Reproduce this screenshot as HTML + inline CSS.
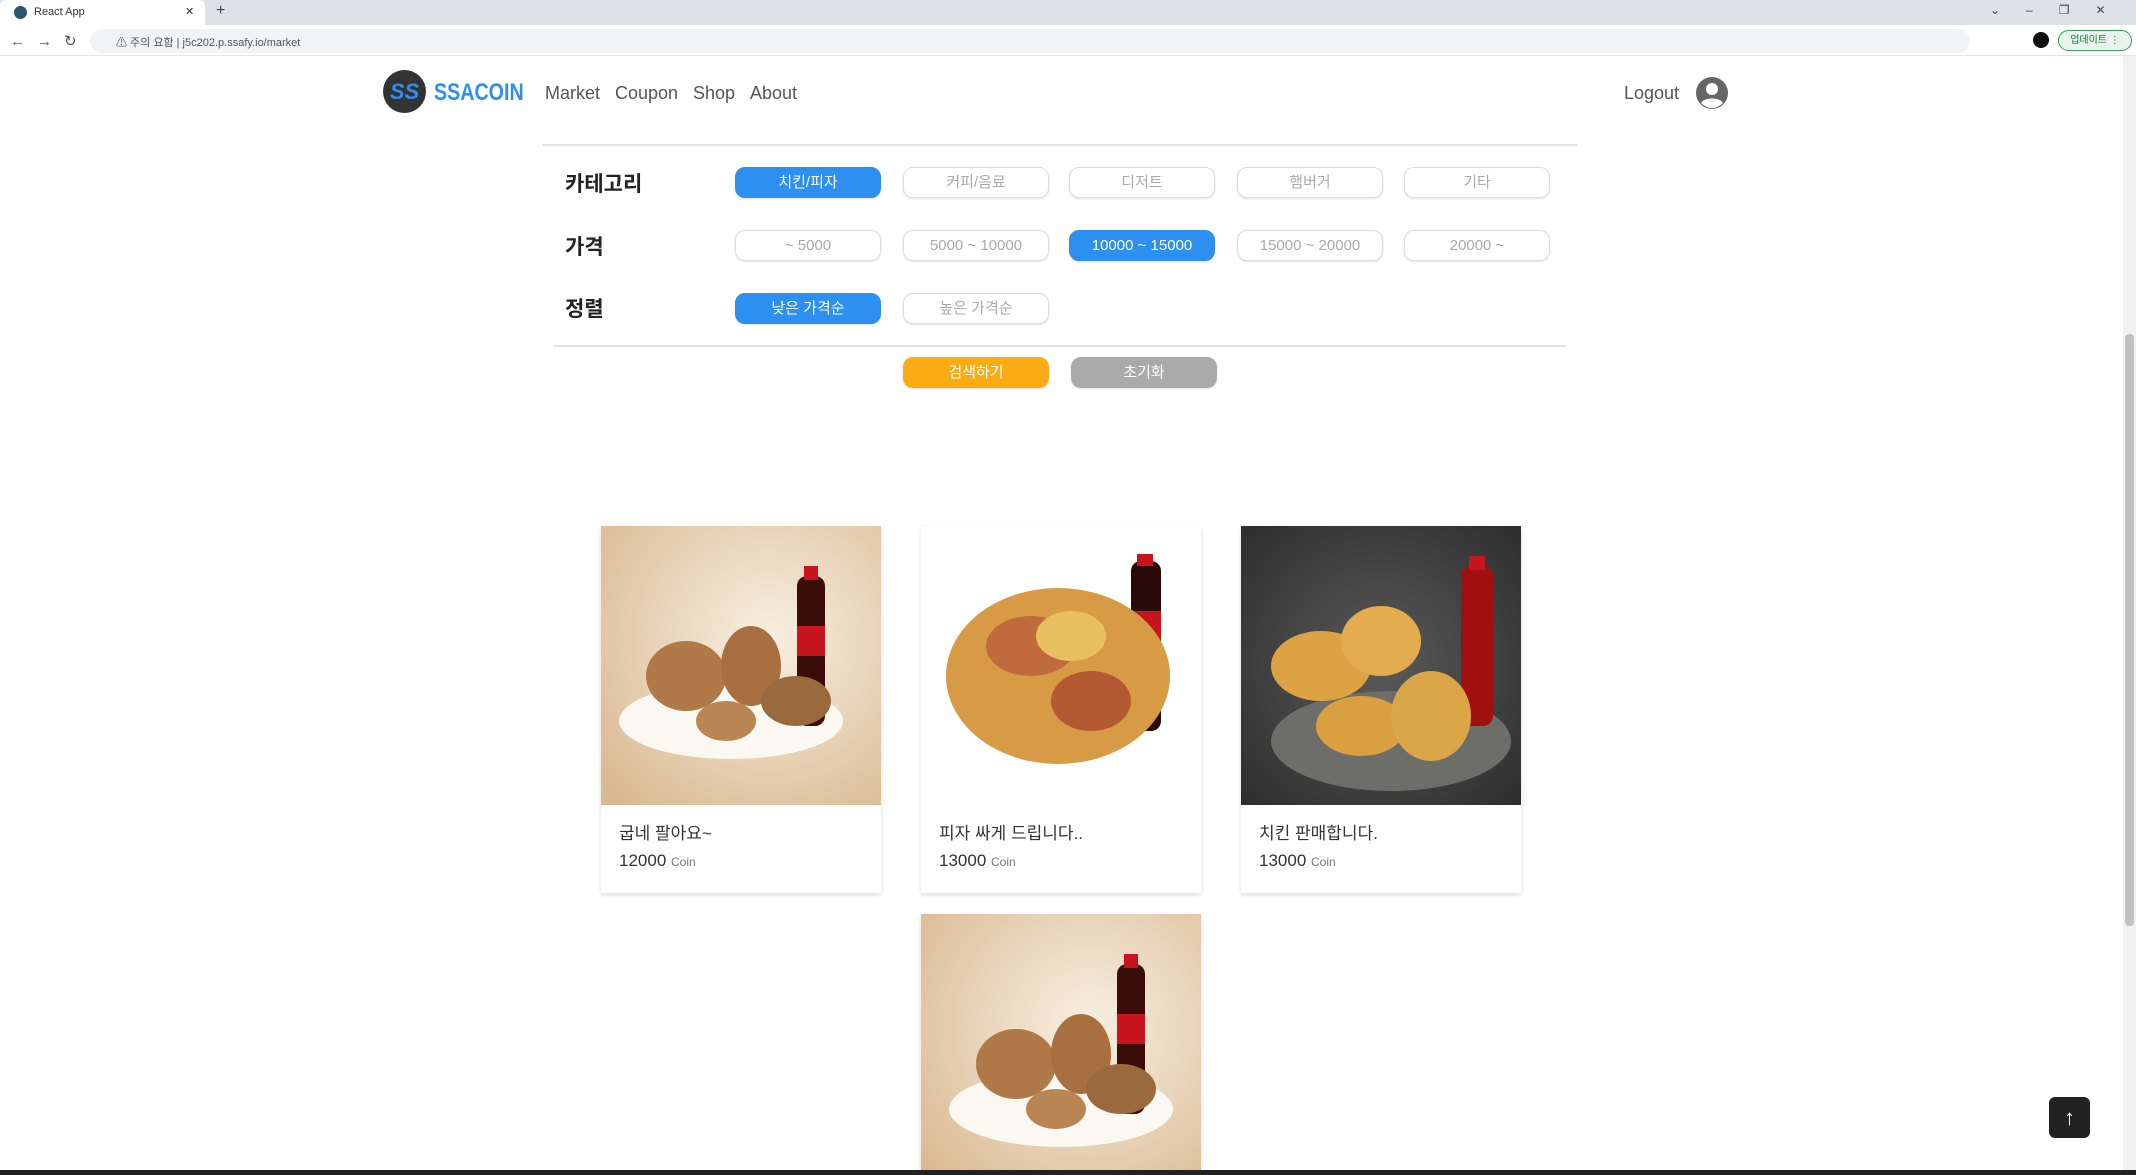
<!DOCTYPE html>
<html><head><meta charset="utf-8"><style>
*{box-sizing:border-box;margin:0;padding:0}
html,body{width:2136px;height:1175px;overflow:hidden}
body{background:#fff;font-family:"Liberation Sans","Noto Sans CJK KR",sans-serif;position:relative;color:#222}
.abs{position:absolute}
.tabbar{left:0;top:0;width:2136px;height:25px;background:#dee1e6}
.tab{left:0;top:0;width:205px;height:25px;background:#fff;border-radius:6px 6px 0 0;font-size:11px;color:#333;padding:6px 0 0 34px}
.addr{left:0;top:25px;width:2136px;height:31px;background:#fff;border-bottom:1px solid #e4e4e4}
.url{left:90px;top:29px;width:1880px;height:24px;background:#f1f3f4;border-radius:12px;font-size:11px;color:#555;padding:5px 0 0 26px}
.nav{font-size:18px;color:#555;top:83px}
.lbl{font-size:21px;font-weight:bold;color:#222;left:565px}
.btn{width:146px;height:31px;border-radius:10px;border:1.5px solid #ddd;background:#fff;color:#aaa;font-size:15px;text-align:center;line-height:30px;box-shadow:0 1px 2px rgba(0,0,0,.12)}
.btn.on{background:#2d8ff0;border-color:#2d8ff0;color:#fff}
.card{width:280px;height:367px;background:#fff;box-shadow:0 2px 5px rgba(0,0,0,.15);overflow:hidden}
.card svg{display:block}
.t{position:absolute;left:18px;top:293px;font-size:17px;color:#333}
.p{position:absolute;left:18px;top:325px;font-size:17px;color:#333}
.p small{font-size:12px;color:#777}
</style></head><body>
<div class="abs tabbar"></div>
<div class="abs tab">React App<span style="position:absolute;left:185px;top:5px">✕</span></div>
<div class="abs" style="left:14px;top:6px;width:13px;height:13px;border-radius:50%;background:#2b5570"></div>
<div class="abs" style="left:216px;top:2px;font-size:16px;color:#444">+</div>
<div class="abs" style="left:1990px;top:3px;font-size:12px;color:#444;letter-spacing:26px">⌄–❐✕</div>
<div class="abs addr"></div>
<div class="abs" style="left:10px;top:32px;font-size:15px;color:#555;letter-spacing:12px">←→↻</div>
<div class="abs url">⚠ 주의 요함 | j5c202.p.ssafy.io/market</div>
<div class="abs" style="left:2033px;top:32px;width:16px;height:16px;border-radius:50%;background:#111"></div>
<div class="abs" style="left:2058px;top:30px;width:74px;height:21px;border-radius:11px;border:1px solid #3a9a5a;background:#e8f5ec;font-size:10px;color:#1a7a3a;text-align:center;line-height:19px">업데이트 ⋮</div>

<div class="abs" style="left:383px;top:70px;width:43px;height:43px;border-radius:50%;background:#333;color:#2d8ff0;font-weight:bold;font-size:22px;text-align:center;line-height:43px;font-style:italic">SS</div>
<div class="abs" style="left:434px;top:79px;font-size:24px;font-weight:bold;color:#2d8ff0;transform:scaleX(.82);transform-origin:left">SSACOIN</div>
<div class="abs nav" style="left:545px">Market</div>
<div class="abs nav" style="left:615px">Coupon</div>
<div class="abs nav" style="left:693px">Shop</div>
<div class="abs nav" style="left:750px">About</div>
<div class="abs nav" style="left:1624px">Logout</div>
<svg class="abs" style="left:1695px;top:76px" width="34" height="34" viewBox="0 0 34 34"><circle cx="17" cy="17" r="16" fill="#666"/><circle cx="17" cy="13" r="6" fill="#fff"/><path d="M6 27c3-6 19-6 22 0c-3 3-7 5-11 5s-8-2-11-5z" fill="#fff"/></svg>

<div class="abs" style="left:542px;top:144px;width:1035px;height:2px;background:#e4e4e4"></div>
<div class="abs lbl" style="top:168px">카테고리</div>
<div class="abs lbl" style="top:231px">가격</div>
<div class="abs lbl" style="top:293px">정렬</div>

<div class="abs btn on" style="left:735px;top:167px">치킨/피자</div>
<div class="abs btn" style="left:903px;top:167px">커피/음료</div>
<div class="abs btn" style="left:1069px;top:167px">디저트</div>
<div class="abs btn" style="left:1237px;top:167px">햄버거</div>
<div class="abs btn" style="left:1404px;top:167px">기타</div>

<div class="abs btn" style="left:735px;top:230px">~ 5000</div>
<div class="abs btn" style="left:903px;top:230px">5000 ~ 10000</div>
<div class="abs btn on" style="left:1069px;top:230px">10000 ~ 15000</div>
<div class="abs btn" style="left:1237px;top:230px">15000 ~ 20000</div>
<div class="abs btn" style="left:1404px;top:230px">20000 ~</div>

<div class="abs btn on" style="left:735px;top:293px">낮은 가격순</div>
<div class="abs btn" style="left:903px;top:293px">높은 가격순</div>

<div class="abs" style="left:553px;top:345px;width:1013px;height:2px;background:#e4e4e4"></div>
<div class="abs btn" style="left:903px;top:357px;background:#fbac14;border-color:#fbac14;color:#fff">검색하기</div>
<div class="abs btn" style="left:1071px;top:357px;background:#aaa;border-color:#aaa;color:#fff">초기화</div>

<div class="abs card" style="left:601px;top:526px">
<svg width="280" height="279" viewBox="0 0 280 279"><defs><radialGradient id="g1" cx="60%" cy="40%" r="80%"><stop offset="0" stop-color="#f7efe2"/><stop offset="1" stop-color="#d9b88f"/></radialGradient></defs><rect width="280" height="279" fill="url(#g1)"/><ellipse cx="130" cy="195" rx="112" ry="38" fill="#fbf8f2"/><rect x="196" y="50" width="28" height="150" rx="10" fill="#3b0d08"/><rect x="203" y="40" width="14" height="14" fill="#c8141c"/><rect x="196" y="100" width="28" height="30" fill="#c8141c"/><ellipse cx="85" cy="150" rx="40" ry="35" fill="#b07a48"/><ellipse cx="150" cy="140" rx="30" ry="40" fill="#a87040"/><ellipse cx="125" cy="195" rx="30" ry="20" fill="#b98552"/><ellipse cx="195" cy="175" rx="35" ry="25" fill="#9a6a3e"/></svg>
<div class="t">굽네 팔아요~</div><div class="p">12000 <small>Coin</small></div></div>

<div class="abs card" style="left:921px;top:526px">
<svg width="280" height="279" viewBox="0 0 280 279"><rect width="280" height="279" fill="#fff"/><rect x="210" y="35" width="30" height="170" rx="10" fill="#2a0a08"/><rect x="216" y="28" width="16" height="12" fill="#c8141c"/><rect x="210" y="85" width="30" height="30" fill="#c8141c"/><ellipse cx="137" cy="150" rx="112" ry="88" fill="#d79a45"/><ellipse cx="110" cy="120" rx="45" ry="30" fill="#c06a3e"/><ellipse cx="170" cy="175" rx="40" ry="30" fill="#b35a33"/><ellipse cx="150" cy="110" rx="35" ry="25" fill="#e8c060"/></svg>
<div class="t">피자 싸게 드립니다..</div><div class="p">13000 <small>Coin</small></div></div>

<div class="abs card" style="left:1241px;top:526px">
<svg width="280" height="279" viewBox="0 0 280 279"><defs><radialGradient id="g3" cx="50%" cy="50%" r="70%"><stop offset="0" stop-color="#5a5a5a"/><stop offset="1" stop-color="#2e2e2e"/></radialGradient></defs><rect width="280" height="279" fill="url(#g3)"/><ellipse cx="150" cy="215" rx="120" ry="50" fill="#6d6d6a"/><rect x="220" y="40" width="32" height="160" rx="10" fill="#a01010"/><rect x="228" y="30" width="16" height="14" fill="#c8141c"/><ellipse cx="80" cy="140" rx="50" ry="35" fill="#dca243"/><ellipse cx="140" cy="115" rx="40" ry="35" fill="#e3ad4f"/><ellipse cx="120" cy="200" rx="45" ry="30" fill="#d9a040"/><ellipse cx="190" cy="190" rx="40" ry="45" fill="#dba648"/></svg>
<div class="t">치킨 판매합니다.</div><div class="p">13000 <small>Coin</small></div></div>

<div class="abs card" style="left:921px;top:914px;height:256px">
<svg width="280" height="279" viewBox="0 0 280 279"><rect width="280" height="279" fill="url(#g1)"/><ellipse cx="140" cy="195" rx="112" ry="38" fill="#fbf8f2"/><rect x="196" y="50" width="28" height="150" rx="10" fill="#3b0d08"/><rect x="203" y="40" width="14" height="14" fill="#c8141c"/><rect x="196" y="100" width="28" height="30" fill="#c8141c"/><ellipse cx="95" cy="150" rx="40" ry="35" fill="#b07a48"/><ellipse cx="160" cy="140" rx="30" ry="40" fill="#a87040"/><ellipse cx="135" cy="195" rx="30" ry="20" fill="#b98552"/><ellipse cx="200" cy="175" rx="35" ry="25" fill="#9a6a3e"/></svg></div>

<div class="abs" style="left:2123px;top:56px;width:13px;height:1115px;background:#f1f1f1"></div>
<div class="abs" style="left:2125px;top:334px;width:9px;height:592px;background:#c1c1c1;border-radius:4px"></div>
<div class="abs" style="left:2049px;top:1097px;width:41px;height:41px;border-radius:6px;background:#222;color:#fff;font-size:22px;text-align:center;line-height:41px">↑</div>
<div class="abs" style="left:0;top:1170px;width:2136px;height:5px;background:#222;z-index:5"></div>
</body></html>
